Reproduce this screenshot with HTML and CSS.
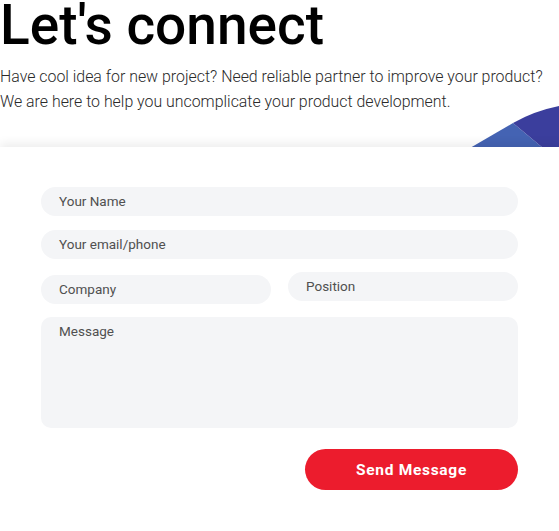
FILE: index.html
```html
<!DOCTYPE html>
<html lang="en">
<head>
<meta charset="utf-8">
<title>Let's connect</title>
<link rel="stylesheet" href="styles.css">
</head>
<body>
<section class="contact">
  <header class="intro">
    <h1 class="title">Let's connect</h1>
    <p class="lead">Have cool idea for new project? Need reliable partner to improve your product? We are here to help you uncomplicate your product development.</p>
  </header>
  <div class="stage">
    <svg class="deco" width="89" height="43" viewBox="0 0 89 43" aria-hidden="true">
      <path d="M0 43 L 43 18 L 73 43 Z" fill="#4463b3"/>
      <path d="M43 18 Q 64 6 89 1 L 89 43 L 73 43 Z" fill="#3b3e9d"/>
    </svg>
    <form class="card">
      <div class="field full">Your Name</div>
      <div class="field full">Your email/phone</div>
      <div class="pair">
        <div class="field company">Company</div>
        <div class="field position">Position</div>
      </div>
      <div class="field message">Message</div>
      <div class="actions">
        <button type="button" class="send">Send Message</button>
      </div>
    </form>
  </div>
</section>
</body>
</html>
```

FILE: styles.css
```css
html, body {
  margin: 0;
  padding: 0;
  background: #ffffff;
}
body {
  font-family: Roboto, "Liberation Sans", Arial, sans-serif;
  color: #111;
  width: 559px;
  overflow: hidden;
}
.title {
  margin: 0;
  font-size: 55px;
  line-height: 50px;
  font-weight: 500;
  color: #000;
}
.lead {
  margin: 14px 0 0 0;
  font-size: 15.9px;
  line-height: 25px;
  font-weight: 300;
  color: #2a2a2a;
  max-width: 555px;
}
.stage {
  position: relative;
  margin-top: 33px;
}
.deco {
  position: absolute;
  right: 0;
  top: -42px;
  display: block;
}
.card {
  position: relative;
  background: #fff;
  box-shadow: 0 -4px 9px rgba(0, 0, 0, 0.07);
  padding: 40px 41px 60px 41px;
  display: flex;
  flex-direction: column;
  gap: 14px;
  min-height: 300px;
}
.field {
  background: #f4f5f7;
  border-radius: 15px;
  height: 29px;
  box-sizing: border-box;
  padding: 0 18px;
  font-size: 13.5px;
  line-height: 29px;
  color: #505050;
  font-weight: 400;
}
.pair {
  display: flex;
  gap: 17px;
  align-items: flex-start;
}
.company {
  flex: 1;
  margin-top: 2px;
}
.position {
  flex: 1;
  margin-top: -1px;
}
.message {
  height: 111px;
  border-radius: 10px;
  line-height: 28px;
  margin-top: -1px;
}
.actions {
  display: flex;
  justify-content: flex-end;
  margin-top: 7px;
}
.send {
  width: 213px;
  height: 41px;
  border: none;
  border-radius: 21px;
  background: #ec1c2d;
  color: #fff;
  font-family: Roboto, "Liberation Sans", Arial, sans-serif;
  font-size: 15.5px;
  font-weight: 700;
  letter-spacing: 0.7px;
  cursor: pointer;
}
```
